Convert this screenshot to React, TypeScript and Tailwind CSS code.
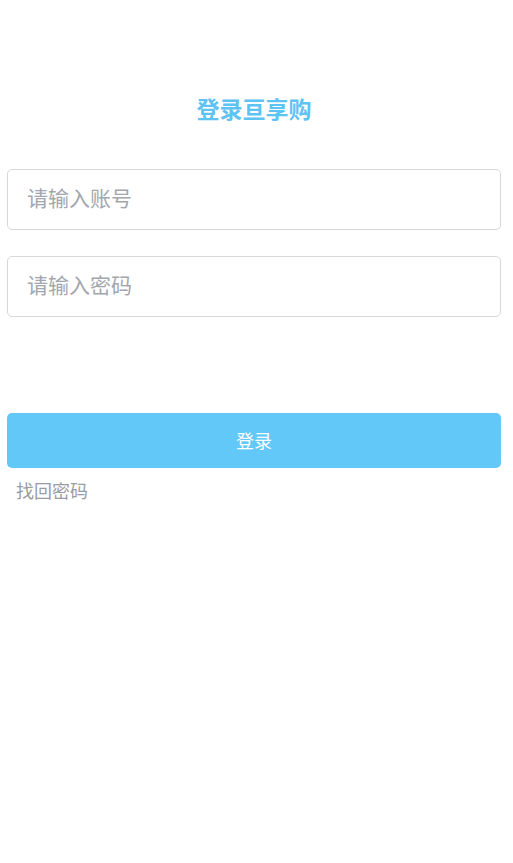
import React, { useState } from 'react';

const font = { fontFamily: '"Noto Sans CJK SC", "Noto Sans", sans-serif' };

export default function App() {
  const [account, setAccount] = useState('');
  const [password, setPassword] = useState('');

  return (
    <div className="min-h-screen bg-white pl-[7px] pr-[12px] pt-[90px]" style={font}>
      <h1 className="text-center text-[23px] font-bold leading-[36px] text-[#5ec2f2]">
        登录亘享购
      </h1>

      <div className="mt-[43px] flex flex-col gap-[26px]">
        <input
          autoFocus
          value={account}
          onChange={(e) => setAccount(e.target.value)}
          placeholder="请输入账号"
          className="h-[61px] w-full rounded-[5px] border border-[#d8d8d8] px-[19px] pb-[5px] text-[21px] text-[#333] caret-[#4fb4ee] outline-none placeholder:text-[#a3a6ae]"
        />
        <input
          type="password"
          value={password}
          onChange={(e) => setPassword(e.target.value)}
          placeholder="请输入密码"
          className="h-[61px] w-full rounded-[5px] border border-[#d8d8d8] px-[19px] pb-[5px] text-[21px] text-[#333] caret-[#4fb4ee] outline-none placeholder:text-[#a3a6ae]"
        />
      </div>

      <button className="mt-[96px] flex h-[55px] w-full items-center justify-center rounded-[5px] bg-[#62c8f8] text-[18px] text-white">
        登录
      </button>

      <div className="mt-[10px] pl-[9px] text-[18px] leading-[24px] text-[#9a9ca3]">找回密码</div>
    </div>
  );
}
